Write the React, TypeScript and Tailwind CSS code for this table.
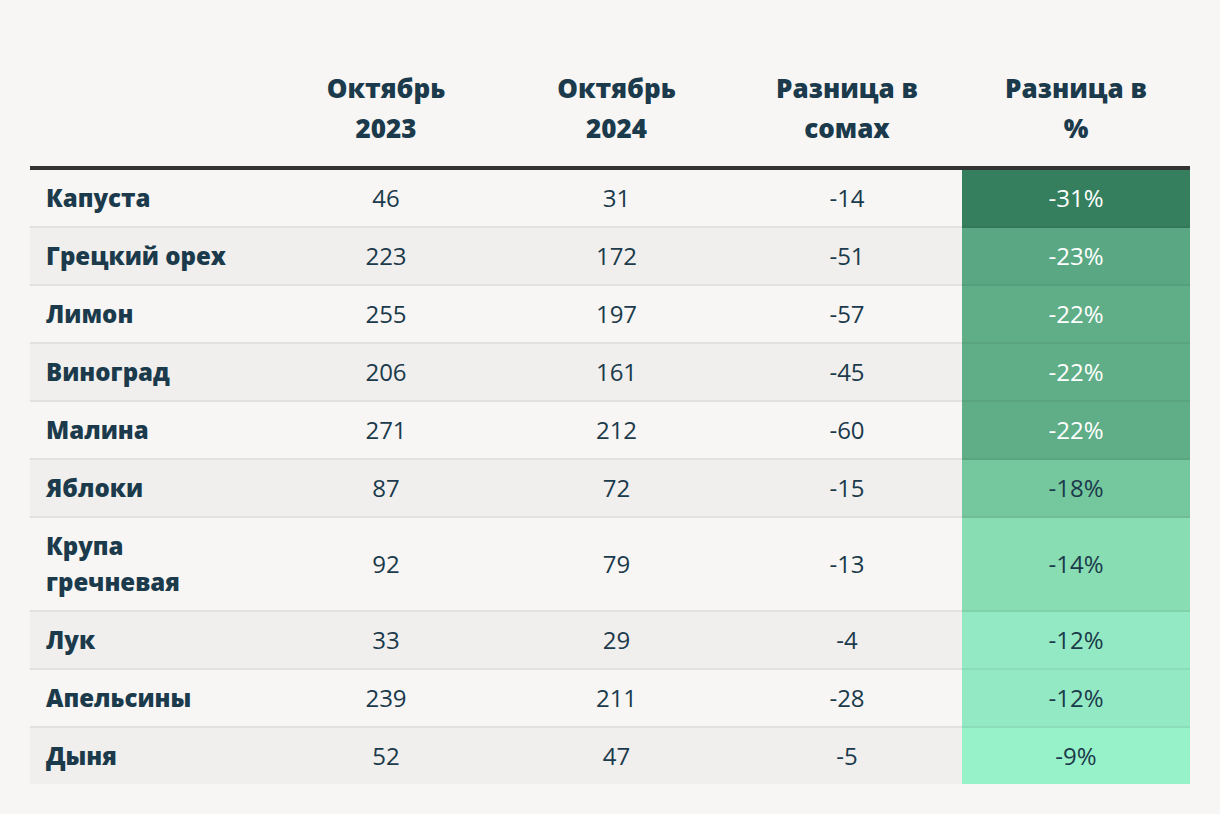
const rows = [
  { name: "Капуста", a: "46", b: "31", d: "-14", p: "-31%", bg: "bg-[#357f5e]", light: true },
  { name: "Грецкий орех", a: "223", b: "172", d: "-51", p: "-23%", bg: "bg-[#5aa883]", light: true },
  { name: "Лимон", a: "255", b: "197", d: "-57", p: "-22%", bg: "bg-[#5fae87]", light: true },
  { name: "Виноград", a: "206", b: "161", d: "-45", p: "-22%", bg: "bg-[#5fae87]", light: true },
  { name: "Малина", a: "271", b: "212", d: "-60", p: "-22%", bg: "bg-[#5fae87]", light: true },
  { name: "Яблоки", a: "87", b: "72", d: "-15", p: "-18%", bg: "bg-[#75c79d]", light: false },
  { name: "Крупа гречневая", a: "92", b: "79", d: "-13", p: "-14%", bg: "bg-[#88ddb3]", light: false },
  { name: "Лук", a: "33", b: "29", d: "-4", p: "-12%", bg: "bg-[#93e9c3]", light: false },
  { name: "Апельсины", a: "239", b: "211", d: "-28", p: "-12%", bg: "bg-[#93e9c3]", light: false },
  { name: "Дыня", a: "52", b: "47", d: "-5", p: "-9%", bg: "bg-[#98f2c9]", light: false },
];

export default function App() {
  return (
    <div
      className="min-h-screen bg-[#f7f6f4] pt-[52px] text-[#1b3a4b]"
      style={{ fontFamily: '"Open Sans", "Noto Sans", sans-serif' }}
    >
      <table className="mx-auto w-[1160px] table-fixed border-separate border-spacing-0 text-[24px]">
        <colgroup>
          <col className="w-[241px]" />
          <col className="w-[230px]" />
          <col className="w-[231px]" />
          <col className="w-[230px]" />
          <col className="w-[228px]" />
        </colgroup>
        <thead>
          <tr>
            <th className="border-b-4 border-[#333333] pt-4 pb-[18px]"></th>
            {["Октябрь 2023", "Октябрь 2024", "Разница в сомах", "Разница в %"].map((h) => (
              <th
                key={h}
                className="border-b-4 border-[#333333] px-10 pt-4 pb-[18px] text-center text-[26px] font-extrabold leading-[40px]"
              >
                {h}
              </th>
            ))}
          </tr>
        </thead>
        <tbody>
          {rows.map((r, i) => {
            const last = i === rows.length - 1;
            const rowBg = i % 2 === 0 ? "bg-[#f7f6f4]" : "bg-[#f0efed]";
            const border = last ? "" : "border-b-2 border-[#e3e1de]";
            return (
              <tr key={r.name} className={rowBg}>
                <td className={`${border} py-[10px] pl-4 pr-8 text-left font-extrabold leading-[36px]`}>
                  {r.name}
                </td>
                <td className={`${border} py-[10px] text-center leading-[36px]`}>{r.a}</td>
                <td className={`${border} py-[10px] text-center leading-[36px]`}>{r.b}</td>
                <td className={`${border} py-[10px] text-center leading-[36px]`}>{r.d}</td>
                <td
                  className={`${last ? "" : "border-b-2 border-black/[0.05]"} ${r.bg} ${
                    r.light ? "text-white" : "text-[#1b3a4b]"
                  } py-[10px] text-center leading-[36px]`}
                >
                  {r.p}
                </td>
              </tr>
            );
          })}
        </tbody>
      </table>
    </div>
  );
}
